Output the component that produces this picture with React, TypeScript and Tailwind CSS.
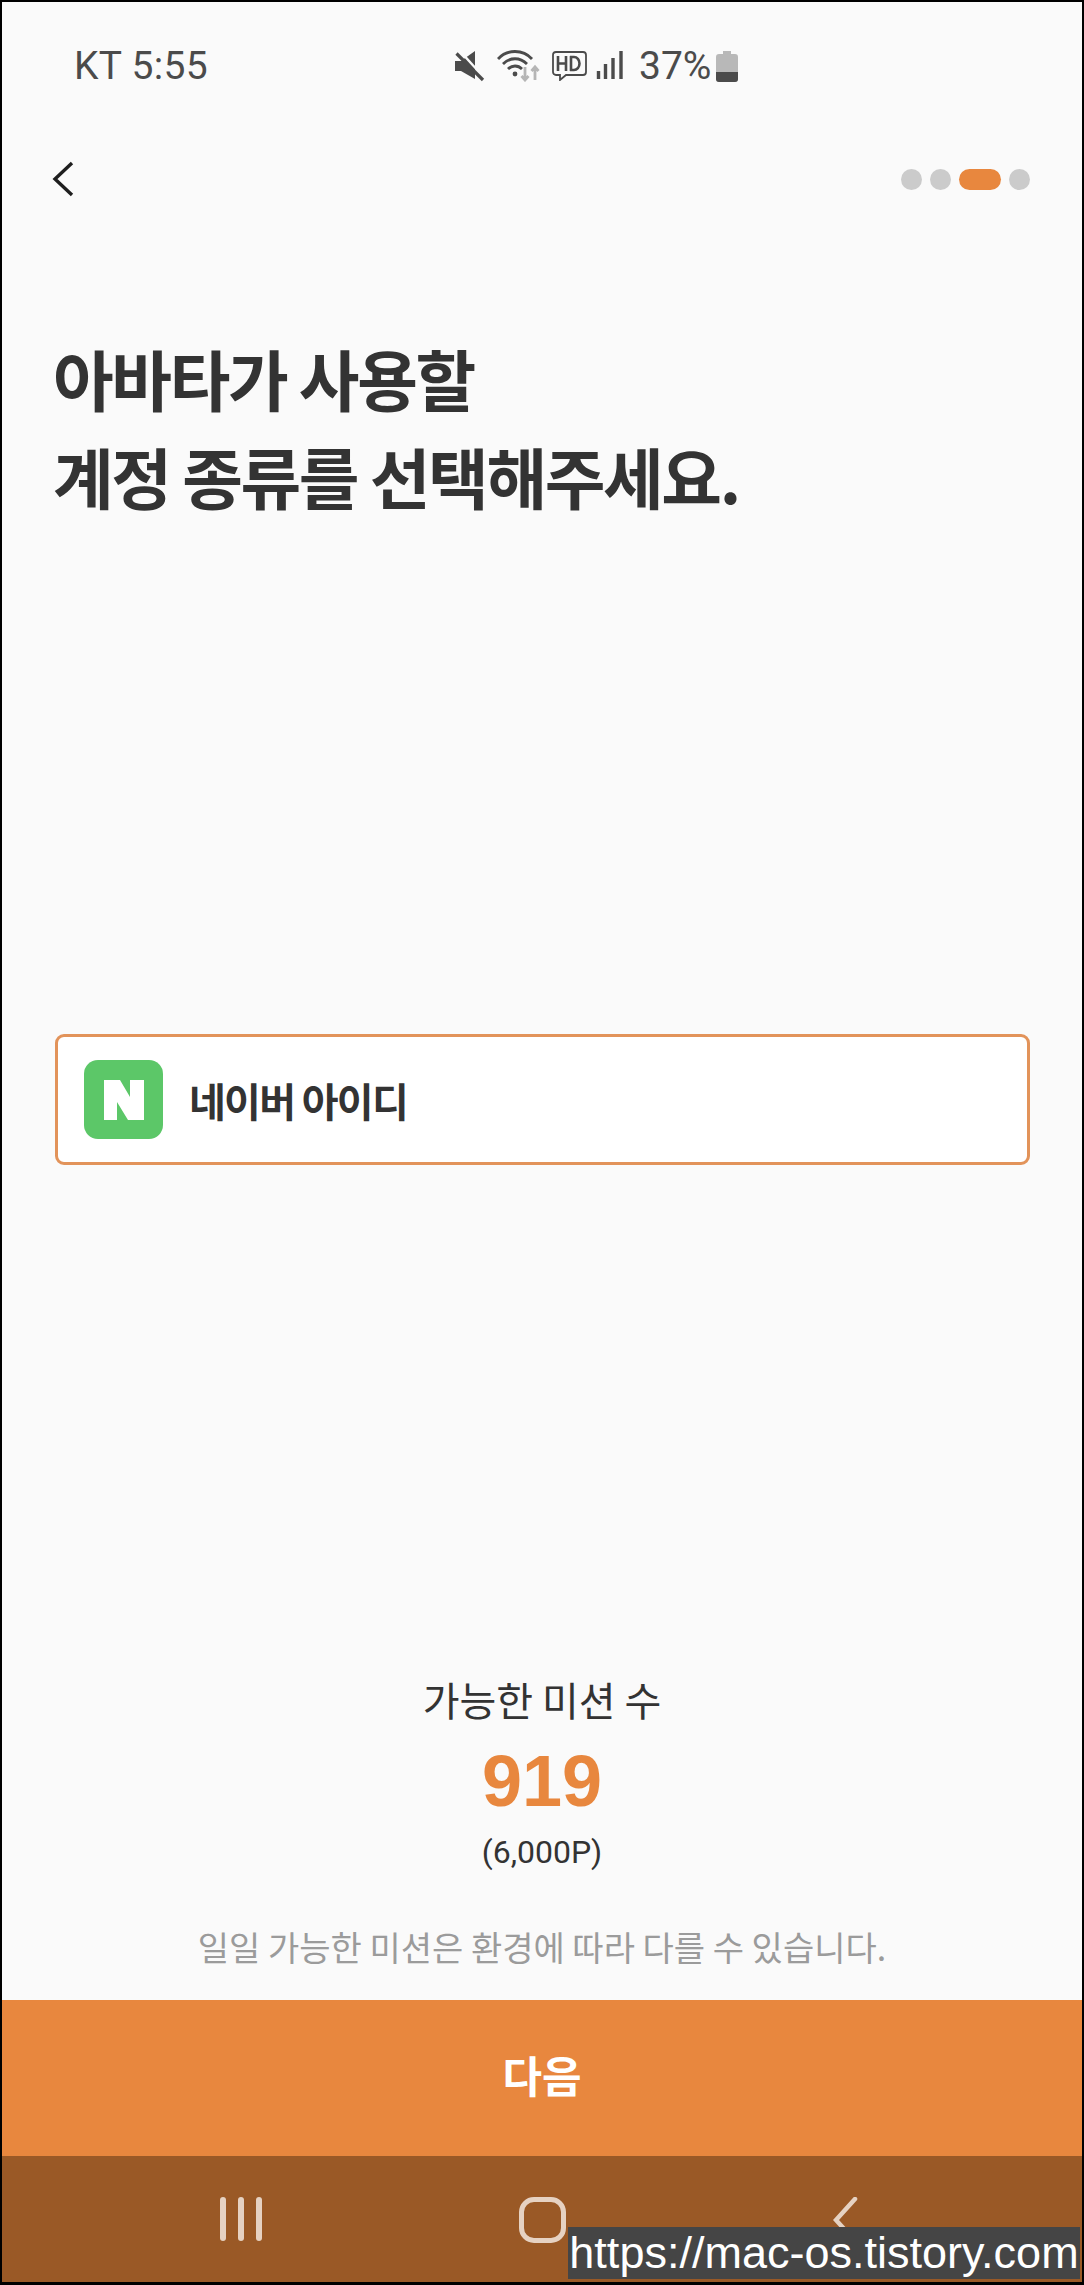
const KR = "font-['Noto_Sans_CJK_KR','Noto_Sans',sans-serif]";

function StatusBar() {
  return (
    <div className="flex h-[86px] items-end justify-between pl-[72px] pr-[344px] text-[#4b4b4b] font-['Roboto',sans-serif] text-[39px] leading-[44px]">
      <span className="tracking-[0.300px]">KT 5:55</span>
      <div className="flex items-center">
        <svg width="30" height="32" viewBox="0 0 30 32" className="mr-[12px]">
          <path d="M0 11h6L20 1v28L6 21H0z" fill="#4b4b4b" />
          <path d="M4.500 0.500L29 27.500" stroke="#fafafa" strokeWidth="2.400" fill="none" />
          <path d="M1.500 3.500L28 30" stroke="#4b4b4b" strokeWidth="3.200" fill="none" />
        </svg>
        <svg width="44" height="32" viewBox="0 0 44 32" className="mr-[11px]">
          <g fill="none" stroke="#4b4b4b" strokeWidth="2.800">
            <path d="M1 9C10 -1 26 -1 35 9" />
            <path d="M6 14c7-7 17-7 24 0" />
            <path d="M11 19c4-4 10-4 14 0" />
          </g>
          <circle cx="18" cy="24" r="2.400" fill="#4b4b4b" />
          <path d="M28 17v13M24.500 26l3.500 4 3.500-4M38 30V17M34.500 21l3.500-4 3.500 4" fill="none" stroke="#b5b5b5" strokeWidth="2.800" />
        </svg>
        <svg width="35" height="30" viewBox="0 0 35 30" className="mr-[9px]">
          <path d="M4 1h27a3 3 0 0 1 3 3v17a3 3 0 0 1-3 3H14l-6 5v-5H4a3 3 0 0 1-3-3V4a3 3 0 0 1 3-3z" fill="none" stroke="#4b4b4b" strokeWidth="1.800" />
          <path d="M6 5v15M14 5v15M6 12.500h8M19 5v15M18 6h4a5.500 6.500 0 0 1 0 13h-4" fill="none" stroke="#4b4b4b" strokeWidth="2.600" />
        </svg>
        <svg width="27" height="30" viewBox="0 0 27 30" className="mr-[16px]">
          <path d="M2.500 20v8M9.500 13v15M17 7v21M25 0v28" stroke="#4b4b4b" strokeWidth="3.400" fill="none" />
        </svg>
        <span className="mr-[6px] w-[71px]">37%</span>
        <svg width="22" height="31" viewBox="0 0 22 31">
          <path d="M7 0h8v3h4a3 3 0 0 1 3 3v22a3 3 0 0 1-3 3H3a3 3 0 0 1-3-3V6a3 3 0 0 1 3-3h4z" fill="#b8b8b8" />
          <path d="M0 21h22v7a3 3 0 0 1-3 3H3a3 3 0 0 1-3-3z" fill="#4b4b4b" />
        </svg>
      </div>
    </div>
  );
}

function TopBar() {
  return (
    <div className="mt-[71px] flex h-[40px] items-center justify-between pl-[49px] pr-[52px]">
      <svg width="24" height="38" viewBox="0 0 24 38">
        <path d="M21 3L4 19l17 16" fill="none" stroke="#1e1e1e" strokeWidth="3.400" />
      </svg>
      <div className="flex gap-[8px]">
        <div className="h-[21px] w-[21px] rounded-full bg-[#cbcbcb]" />
        <div className="h-[21px] w-[21px] rounded-full bg-[#cbcbcb]" />
        <div className="h-[21px] w-[42px] rounded-full bg-[#e8873e]" />
        <div className="h-[21px] w-[21px] rounded-full bg-[#cbcbcb]" />
      </div>
    </div>
  );
}

export default function App() {
  return (
    <div className={`${KR} relative flex h-[2285px] w-[1084px] flex-col overflow-hidden border-t-2 border-r-2 border-b-[3px] border-l-2 border-black bg-[#fafafa]`}>
      <StatusBar />
      <TopBar />
      <h1 className="mt-[129px] pl-[51px] text-[66px] font-bold leading-[98px] tracking-[-2.400px] text-[#333333]">
        아바타가 사용할
        <br />
        계정 종류를 선택해주세요.
      </h1>
      <div className="ml-[53px] mr-[52px] mt-[510px] flex h-[131px] items-center rounded-[9px] border-[3px] border-[#e2935a] bg-white pl-[26px]">
        <div className="flex h-[79px] w-[79px] items-center justify-center rounded-[14px] bg-[#5cc768]">
          <svg width="40" height="40" viewBox="0 0 40 40">
            <path d="M0 0h16l10 17V0h14v40H24L13 22v18H0z" fill="#fff" />
          </svg>
        </div>
        <span className="ml-[26px] text-[40px] font-bold leading-[60px] tracking-[-1.700px] text-[#333333]">네이버 아이디</span>
      </div>
      <div className="mt-[509px] flex flex-col items-center">
        <div className="text-[40px] leading-[50px] text-[#333333]">가능한 미션 수</div>
        <div className="mt-[22px] font-['Liberation_Sans',sans-serif] text-[72px] font-bold leading-[70px] text-[#e8873e]">919</div>
        <div className="mt-[16px] font-['Roboto',sans-serif] text-[32px] leading-[40px] text-[#333333]">(6,000P)</div>
        <div className="mt-[50px] text-[34px] leading-[50px] text-[#9b9b9b]">일일 가능한 미션은 환경에 따라 다를 수 있습니다.</div>
      </div>
      <div className="mt-[auto] flex h-[156px] items-center justify-center bg-[#e8873e] pb-[8px] text-[43px] font-bold text-white">다음</div>
      <div className="flex h-[126px] items-start bg-[#9a5926] pt-[41px]">
        <div className="ml-[218px] flex gap-[12px]">
          <div className="h-[44px] w-[6px] rounded-full bg-[#e6d2c2]" />
          <div className="h-[44px] w-[6px] rounded-full bg-[#e6d2c2]" />
          <div className="h-[44px] w-[6px] rounded-full bg-[#e6d2c2]" />
        </div>
        <div className="ml-[257px] h-[46px] w-[47px] rounded-[15px] border-[5px] border-[#e6d2c2]" />
        <svg width="26" height="50" viewBox="0 0 26 50" className="ml-[267px]">
          <path d="M22 2L3 23l19 21" fill="none" stroke="#e6d2c2" strokeWidth="4.500" strokeLinecap="round" />
        </svg>
      </div>
      <div className="absolute left-[566px] top-[2225px] flex h-[52px] w-[512px] items-center justify-center bg-[#454545] font-['Liberation_Sans',sans-serif] text-[45px] leading-[52px] text-white">
        https://mac-os.tistory.com
      </div>
    </div>
  );
}
